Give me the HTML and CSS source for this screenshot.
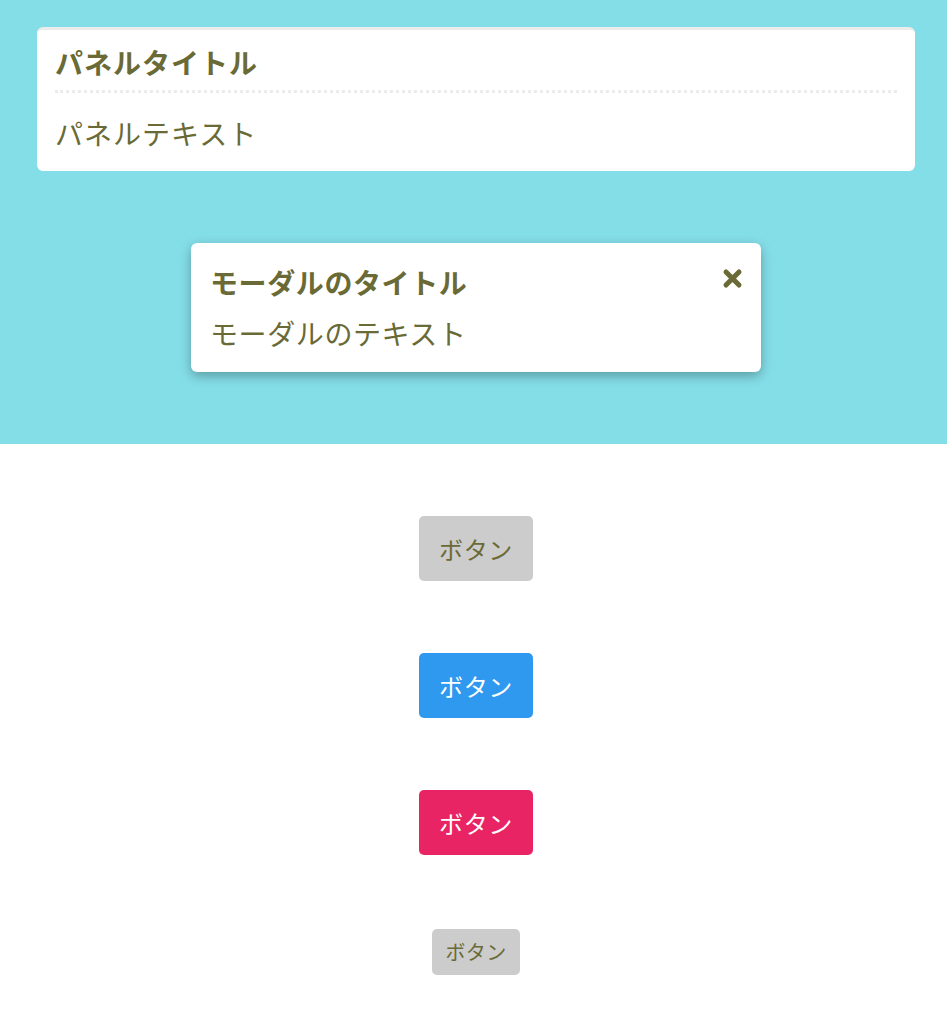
FILE: index.html
```html
<!DOCTYPE html>
<html lang="ja">
<head>
    <meta charset="UTF-8">
    <meta name="viewport" content="width=device-width, initial-scale=1.0">
    <title>コンポーネント</title>
    <link rel="stylesheet" href="styles.css">
</head>
<body>

    <section class="stage">
        <div class="panel">
            <h2 class="panel-title">パネルタイトル</h2>
            <p class="panel-text">パネルテキスト</p>
        </div>

        <div class="modal">
            <div class="modal-head">
                <h2 class="modal-title">モーダルのタイトル</h2>
                <button class="modal-close" aria-label="閉じる">
                    <svg width="21" height="21" viewBox="0 0 21 21">
                        <path d="M4 4 L17 17 M17 4 L4 17" stroke="currentColor" stroke-width="5" stroke-linecap="round" fill="none"/>
                    </svg>
                </button>
            </div>
            <p class="modal-text">モーダルのテキスト</p>
        </div>
    </section>

    <section class="buttons">
        <button class="btn">ボタン</button>
        <button class="btn btn-primary">ボタン</button>
        <button class="btn btn-danger">ボタン</button>
        <button class="btn btn-small">ボタン</button>
    </section>

</body>
</html>
```

FILE: styles.css
```css
* {
    margin: 0;
    padding: 0;
    box-sizing: border-box;
    font-family: 'Noto Sans CJK JP', 'Noto Sans', sans-serif;
}
body {
    background: #fff;
    color: #6a6a36;
}
.stage {
    background: #84dee8;
    padding: 27px 32px 72px 37px;
    display: flex;
    flex-direction: column;
    align-items: center;
}
.panel {
    width: 100%;
    background: #fff;
    border-top: 3px solid #ececec;
    border-radius: 6px;
    padding: 0 18px 18px;
}
.panel-title {
    font-size: 28px;
    font-weight: bold;
    letter-spacing: 1px;
    line-height: 40px;
    padding: 12px 0 8px;
    border-bottom: 3px dotted #ececec;
}
.panel-text {
    font-size: 28px;
    letter-spacing: 1px;
    line-height: 40px;
    padding-top: 20px;
}
.modal {
    margin-top: 72px;
    width: 570px;
    background: #fff;
    border-radius: 6px;
    padding: 19px 18px 19px 19px;
    box-shadow: 0 4px 12px rgba(0, 0, 0, 0.3);
}
.modal-head {
    display: flex;
    justify-content: space-between;
    align-items: center;
}
.modal-title {
    font-size: 28px;
    font-weight: bold;
    letter-spacing: 0.6px;
    line-height: 40px;
}
.modal-close {
    background: none;
    border: none;
    color: #6a6a36;
    display: flex;
    margin-top: -8px;
    cursor: pointer;
}
.modal-text {
    font-size: 28px;
    letter-spacing: 0.6px;
    line-height: 40px;
    margin-top: 11px;
}
.buttons {
    display: flex;
    flex-direction: column;
    align-items: center;
    gap: 72px;
    padding: 72px 32px 48px 37px;
}
.btn {
    background: #cccccc;
    color: #6a6a36;
    font-size: 24px;
    letter-spacing: 0.6px;
    line-height: 37px;
    padding: 14px 20px 14px 20px;
    border: none;
    border-radius: 5px;
    cursor: pointer;
}
.btn-primary {
    background: #2f98ef;
    color: #fff;
}
.btn-danger {
    background: #e82464;
    color: #fff;
}
.btn-small {
    font-size: 20px;
    letter-spacing: 0.4px;
    line-height: 30px;
    padding: 8px 13px;
    margin-top: 2px;
}
```
